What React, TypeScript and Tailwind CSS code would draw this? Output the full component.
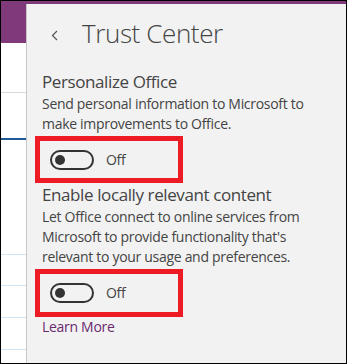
import React from "react";

const font = { fontFamily: '"Open Sans", "Noto Sans", sans-serif' };

function Toggle({ tall }: { tall?: boolean }) {
  return (
    <div
      className={`-ml-[7px] flex w-[148px] items-center border-[5px] border-[#ed1c24] pl-[10px] ${
        tall ? "h-[48px]" : "h-[47px]"
      }`}
    >
      <div className="flex h-[20px] w-[44px] items-center rounded-full border-2 border-[#333] pl-[3px]">
        <div className="h-[10px] w-[10px] rounded-full bg-[#333]" />
      </div>
      <span className="ml-[12px] text-[14px] leading-[20px] tracking-[-0.3px] text-[#444]">Off</span>
    </div>
  );
}

export default function App() {
  return (
    <div
      className="flex h-[364px] w-[347px] border border-black bg-white"
      style={font}
    >
      {/* background app strip */}
      <div className="flex w-[25px] flex-col">
        <div className="h-[42px] bg-[#80397b]" />
        <div className="mt-[49px] h-px bg-[#d9d9d9]" />
        <div className="mt-[45px] h-[2px] bg-[#1e5a96]" />
        <div className="mt-[114px] h-px bg-[#cfe4f5]" />
        <div className="mt-[30px] h-px bg-[#cfe4f5]" />
        <div className="mt-[31px] h-px bg-[#cfe4f5]" />
        <div className="mt-[31px] h-px bg-[#cfe4f5]" />
      </div>
      {/* panel */}
      <div className="flex w-[320px] flex-col">
        <div className="h-[3px] bg-[#80397b]" />
        <div className="flex flex-1 flex-col border-l border-[#c8c8c8] bg-[#f2f2f2] pl-[15px] pt-[9px]">
          <div className="flex h-[40px] items-center">
            <svg width="8" height="11" viewBox="0 0 8 11" className="ml-[9px] mt-[4px]">
              <polyline points="6,1 1.5,5.5 6,10" fill="none" stroke="#555" strokeWidth="1.2" />
            </svg>
            <span className="ml-[23px] text-[26px] font-light leading-[40px] tracking-[-0.4px] text-[#444]">
              Trust Center
            </span>
          </div>
          <div className="mt-[17px] text-[17px] leading-[24px] tracking-[-0.4px] text-[#444]">
            Personalize Office
          </div>
          <div className="text-[14px] leading-[20px] tracking-[-0.3px] text-[#444]">
            Send personal information to Microsoft to
            <br />
            make improvements to Office.
          </div>
          <div className="mt-[2px]">
            <Toggle />
          </div>
          <div className="text-[17px] leading-[24px] tracking-[-0.4px] text-[#444]">
            Enable locally relevant content
          </div>
          <div className="text-[14px] leading-[20px] tracking-[-0.3px] text-[#444]">
            Let Office connect to online services from
            <br />
            Microsoft to provide functionality that's
            <br />
            relevant to your usage and preferences.
          </div>
          <div className="mt-[2px]">
            <Toggle tall />
          </div>
          <div className="text-[14px] leading-[20px] tracking-[-0.3px] text-[#6b2a6e]">Learn More</div>
        </div>
      </div>
    </div>
  );
}
